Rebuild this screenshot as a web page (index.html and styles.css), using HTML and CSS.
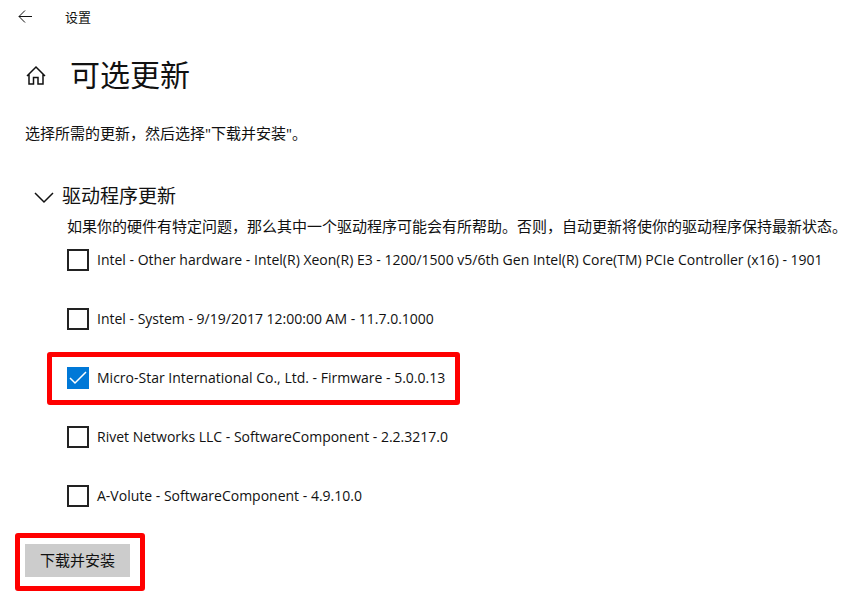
FILE: index.html
```
<!DOCTYPE html>
<html lang="zh-CN">
<head>
    <meta charset="UTF-8">
    <meta name="viewport" content="width=device-width, initial-scale=1.0">
    <title>设置</title>
    <link rel="stylesheet" href="styles.css">
</head>
<body>

<header class="title-bar">
    <button class="icon-button" type="button" aria-label="返回">
        <svg width="14" height="14" viewBox="0 0 14 14"><path d="M14 7.500H1M7 1.500L1 7.500l6 6"/></svg>
    </button>
    <span>设置</span>
</header>

<main>
    <div class="page-heading">
        <a class="home-link" href="#" aria-label="主页">
            <svg width="20" height="20" viewBox="0 0 20 20"><path d="M1 11L10 2l9 9M3 9.500V19h4.500v-6.500h4.500V19H17V9.500"/></svg>
        </a>
        <h1>可选更新</h1>
    </div>

    <p class="intro">选择所需的更新，然后选择"下载并安装"。</p>

    <section class="updates">
        <h2>
            <button class="expander" type="button" aria-expanded="true">
                <svg width="20" height="16" viewBox="0 0 20 16"><path d="M1 5l9 9 9-9"/></svg>
                驱动程序更新
            </button>
        </h2>
        <p class="description">如果你的硬件有特定问题，那么其中一个驱动程序可能会有所帮助。否则，自动更新将使你的驱动程序保持最新状态。</p>

        <ul class="update-list">
            <li>
                <label class="update"><input type="checkbox">Intel - Other hardware - Intel(R) Xeon(R) E3 - 1200/1500 v5/6th Gen Intel(R) Core(TM) PCIe Controller (x16) - 1901</label>
            </li>
            <li>
                <label class="update"><input type="checkbox">Intel - System - 9/19/2017 12:00:00 AM - 11.7.0.1000</label>
            </li>
            <li>
                <label class="update marked"><input type="checkbox" checked>Micro-Star International Co., Ltd. - Firmware - 5.0.0.13</label>
            </li>
            <li>
                <label class="update"><input type="checkbox">Rivet Networks LLC - SoftwareComponent - 2.2.3217.0</label>
            </li>
            <li>
                <label class="update"><input type="checkbox">A-Volute - SoftwareComponent - 4.9.10.0</label>
            </li>
        </ul>
    </section>

    <div class="actions marked">
        <button class="install" type="button">下载并安装</button>
    </div>
</main>

</body>
</html>
```
FILE: styles.css
```
body {
    margin: 0;
    background-color: #fff;
    color: #111;
    font-family: "Open Sans", "Noto Sans CJK SC", sans-serif;
    font-size: 15px;
}
h1, h2, p, ul {
    margin: 0;
    padding: 0;
    font-weight: normal;
}
button {
    padding: 0;
    border: none;
    background: none;
    color: inherit;
    font: inherit;
}
svg {
    display: block;
    fill: none;
    stroke: #111;
}
.title-bar {
    display: flex;
    align-items: center;
    gap: 33px;
    height: 32px;
    padding-left: 18px;
    font-size: 13px;
}
.page-heading {
    display: flex;
    align-items: center;
    gap: 24px;
    padding: 21px 0 0 26px;
}
.home-link svg {
    stroke-width: 1.5;
}
h1 {
    font-size: 30px;
    line-height: 44px;
}
.intro {
    padding: 24px 0 0 25px;
    line-height: 24px;
}
.updates {
    padding-top: 37px;
}
.expander {
    display: flex;
    align-items: center;
    gap: 8px;
    padding-left: 34px;
    font-size: 19px;
    line-height: 28px;
}
.expander svg {
    stroke-width: 1.5;
}
.description {
    padding: 8px 0 0 67px;
    line-height: 16px;
    white-space: nowrap;
}
.update-list {
    display: flex;
    flex-direction: column;
    gap: 6px;
    padding-left: 47px;
    list-style: none;
}
.update {
    display: flex;
    align-items: center;
    gap: 8px;
    box-sizing: border-box;
    width: fit-content;
    min-height: 53px;
    padding: 0 10px 2px 15px;
    border: 5px solid transparent;
    border-radius: 3px;
    font-size: 14px;
    white-space: nowrap;
}
.update input {
    appearance: none;
    flex: none;
    width: 22px;
    height: 22px;
    margin: 0;
    border: 2px solid #222;
    background-color: #fff;
}
.update input:checked {
    border-color: #0078d7;
    background: #0078d7 url("data:image/svg+xml,%3Csvg xmlns='http://www.w3.org/2000/svg' viewBox='0 0 18 18'%3E%3Cpath d='M1 9l5 5L17 3' fill='none' stroke='white' stroke-width='1.5'/%3E%3C/svg%3E") center / 18px no-repeat;
}
.marked {
    border: 5px solid #f00;
    border-radius: 3px;
}
.actions {
    width: fit-content;
    margin: 10px 0 0 15px;
    padding: 6px 10px 9px 5px;
}
.install {
    display: block;
    padding: 0 15px;
    background-color: #ccc;
    line-height: 33px;
}
```
